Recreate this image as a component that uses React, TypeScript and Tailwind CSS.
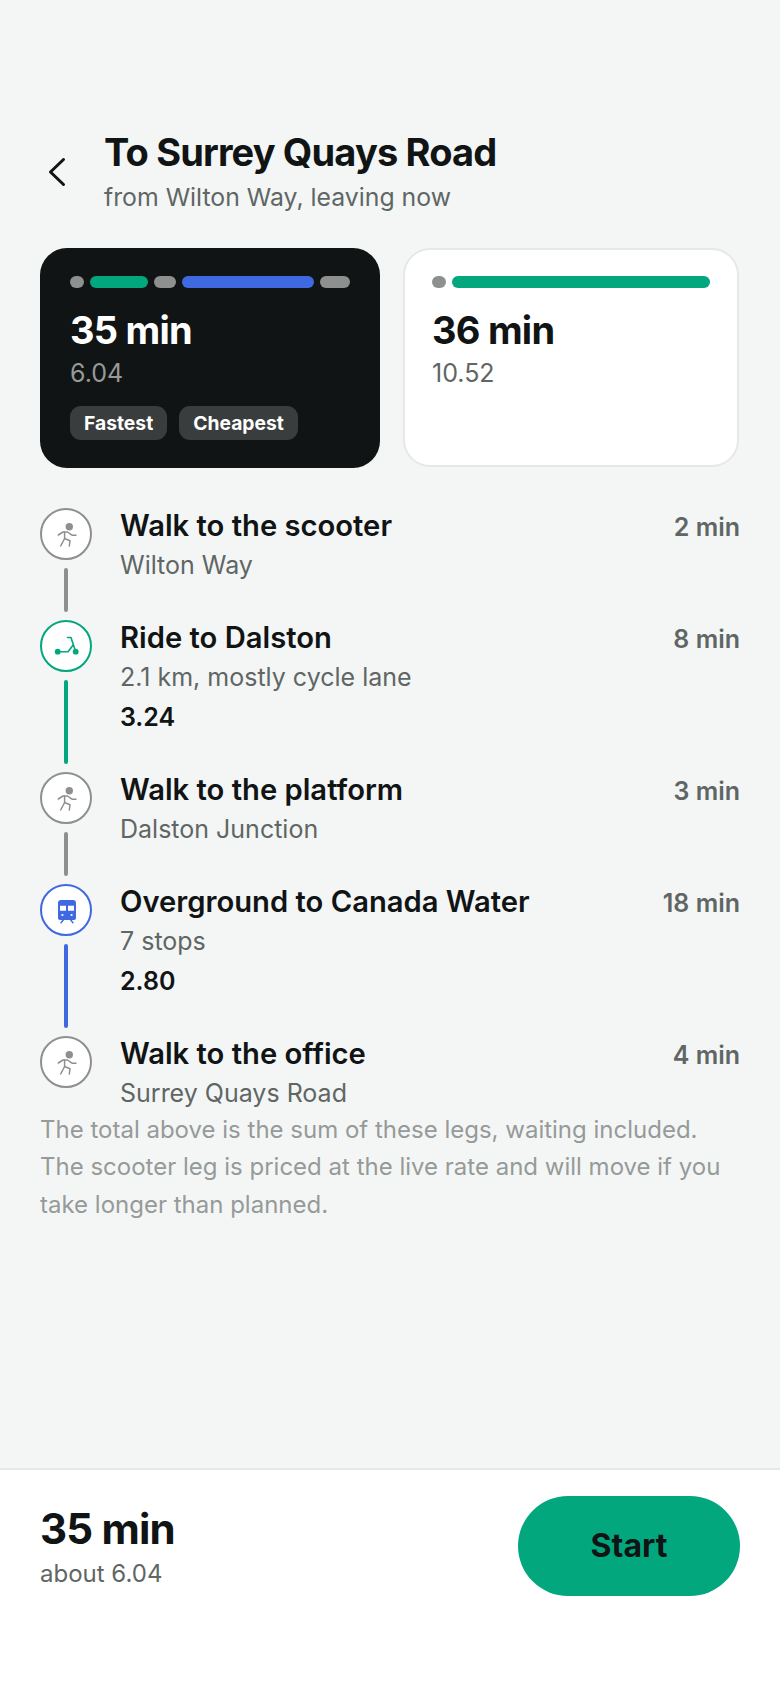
const FONT = "font-['Inter',sans-serif]";

// icon coordinates are in the 52px ring box, viewBox crops the 2px border
const Walk = () => (
  <svg viewBox="2 2 48 48" className="w-12 h-12" fill="none" stroke="#8e908f" strokeWidth="1.5" strokeLinecap="round" strokeLinejoin="round">
    <circle cx="29.3" cy="18.7" r="3.7" fill="#8e908f" stroke="none" />
    <path d="M18.3 27l4.7-3h4.5l4.5 3.2h4" />
    <path d="M24.6 24v6.5l-3.9 7.5" />
    <path d="M24.6 30.5l5.4 2.2-.7 5.3" />
  </svg>
);

const Scooter = () => (
  <svg viewBox="2 2 48 48" className="w-12 h-12" fill="none" stroke="#02a77e" strokeWidth="1.6" strokeLinecap="round" strokeLinejoin="round">
    <path d="M27.5 17.5H31l4.7 14.2" />
    <path d="M17.7 31.7H28l5.2-6.8" />
    <circle cx="17.7" cy="31.7" r="2.9" fill="#02a77e" stroke="none" />
    <circle cx="35.7" cy="31.7" r="2.9" fill="#02a77e" stroke="none" />
  </svg>
);

const Train = () => (
  <svg viewBox="2 2 48 48" className="w-12 h-12" fill="#3f69e0">
    <path
      fillRule="evenodd"
      d="M21 16h12a3 3 0 0 1 3 3v15a2 2 0 0 1-2 2H20a2 2 0 0 1-2-2V19a3 3 0 0 1 3-3zM20 21.7v5h6v-5zm8 0v5h6v-5z"
    />
    <circle cx="22.4" cy="31" r="1.1" fill="#fff" />
    <circle cx="31.6" cy="31" r="1.1" fill="#fff" />
    <path d="M23.3 36L21 38.7M30.7 36l2.3 2.7" stroke="#3f69e0" strokeWidth="1.4" strokeLinecap="round" fill="none" />
  </svg>
);

type Leg = { kind: 'walk' | 'scoot' | 'train'; title: string; sub: string; mins: string; price?: string };

const legs: Leg[] = [
  { kind: 'walk', title: 'Walk to the scooter', sub: 'Wilton Way', mins: '2 min' },
  { kind: 'scoot', title: 'Ride to Dalston', sub: '2.1 km, mostly cycle lane', mins: '8 min', price: '3.24' },
  { kind: 'walk', title: 'Walk to the platform', sub: 'Dalston Junction', mins: '3 min' },
  { kind: 'train', title: 'Overground to Canada Water', sub: '7 stops', mins: '18 min', price: '2.80' },
  { kind: 'walk', title: 'Walk to the office', sub: 'Surrey Quays Road', mins: '4 min' },
];

function LegRow({ leg, last }: { leg: Leg; last: boolean }) {
  const ring = leg.kind === 'walk' ? 'border-[#8e908f]' : leg.kind === 'scoot' ? 'border-[#02a77e]' : 'border-[#3f69e0]';
  const line = leg.kind === 'walk' ? 'bg-[#8e908f]' : leg.kind === 'scoot' ? 'bg-[#02a77e]' : 'bg-[#3f69e0]';
  return (
    <div className="flex gap-7">
      <div className="flex flex-col items-center w-[52px] shrink-0">
        <div className={`w-[52px] h-[52px] rounded-full border-2 bg-white flex items-center justify-center ${ring}`}>
          {leg.kind === 'walk' ? <Walk /> : leg.kind === 'scoot' ? <Scooter /> : <Train />}
        </div>
        {!last && <div className={`w-1 flex-1 my-2 rounded-full ${line}`} />}
      </div>
      <div className={`flex-1 flex justify-between -mt-[2px] ${last ? 'pb-[1px]' : 'pb-[35px]'}`}>
        <div>
          <div className="text-[29.2px] leading-10 font-semibold text-[#111414]">{leg.title}</div>
          <div className="text-[25px] leading-[39px] text-[#5f6664]">{leg.sub}</div>
          {leg.price && <div className="text-[25px] leading-10 font-semibold text-[#111414]">{leg.price}</div>}
        </div>
        <div className="text-[25px] leading-10 font-semibold text-[#5f6664] pt-[1px]">{leg.mins}</div>
      </div>
    </div>
  );
}

function Segments({ items }: { items: { w: number; c: string }[] }) {
  return (
    <div className="flex gap-1.5 h-3">
      {items.map((s, i) => (
        <div key={i} className={`h-3 rounded-full ${s.c}`} style={{ flexGrow: s.w, flexBasis: 0 }} />
      ))}
    </div>
  );
}

export default function App() {
  return (
    <div className={`${FONT} w-[780px] h-[1688px] bg-[#f4f6f6] flex flex-col`}>
      <div className="flex-1 px-10 pt-[127px]">
        <div className="flex items-center gap-[28px]">
          <svg viewBox="0 0 36 36" className="w-9 h-9 shrink-0" fill="none" stroke="#111414" strokeWidth="3" strokeLinecap="round" strokeLinejoin="round">
            <path d="M23.5 5.5L10.5 18l13 12.5" />
          </svg>
          <div>
            <div className="text-[38px] leading-[50px] font-bold tracking-[-0.85px] text-[#111414]">To Surrey Quays Road</div>
            <div className="text-[24.8px] leading-[40px] text-[#5f6664]">from Wilton Way, leaving now</div>
          </div>
        </div>

        <div className="flex gap-[23px] mt-[31px]">
          <div className="w-[340px] h-[220px] rounded-[27px] bg-[#111414] px-[30px] pt-7">
            <Segments items={[
              { w: 14, c: 'bg-[#8e908f]' },
              { w: 58, c: 'bg-[#02a77e]' },
              { w: 22, c: 'bg-[#8e908f]' },
              { w: 132, c: 'bg-[#3f69e0]' },
              { w: 30, c: 'bg-[#8e908f]' },
            ]} />
            <div className="mt-[17px] text-[38px] leading-[50px] font-bold tracking-[-0.76px] text-white">35 min</div>
            <div className="text-[25px] leading-9 text-[#969a98]">6.04</div>
            <div className="flex gap-3 mt-[15px]">
              <span className="h-[34px] px-3.5 rounded-[11px] bg-[#3a3d3d] text-white text-[19.3px] leading-[34px] font-bold">Fastest</span>
              <span className="h-[34px] px-3.5 rounded-[11px] bg-[#3a3d3d] text-white text-[19.3px] leading-[34px] font-bold">Cheapest</span>
            </div>
          </div>
          <div className="w-[336px] h-[219px] rounded-[27px] bg-white border-2 border-[#e6e8e8] px-[27px] pt-[26px]">
            <Segments items={[
              { w: 14, c: 'bg-[#8e908f]' },
              { w: 258, c: 'bg-[#02a77e]' },
            ]} />
            <div className="mt-[17px] text-[38px] leading-[50px] font-bold tracking-[-0.76px] text-[#111414]">36 min</div>
            <div className="text-[25px] leading-9 text-[#5f6664]">10.52</div>
          </div>
        </div>

        <div className="mt-10">
          {legs.map((l, i) => (
            <LegRow key={i} leg={l} last={i === legs.length - 1} />
          ))}
        </div>

        <div className="-mt-[3px] text-[24px] leading-[37.4px] text-[#969a98]">
          The total above is the sum of these legs, waiting included. The scooter leg is priced at the live rate and will move if you take longer than planned.
        </div>
      </div>

      <div className="h-[220px] bg-white border-t-2 border-[#e6e8e8] flex items-start justify-between px-10 pt-[26px]">
        <div className="pt-[6px]">
          <div className="text-[42px] leading-[54px] font-bold tracking-[-0.8px] text-[#111414]">35 min</div>
          <div className="text-[24px] leading-9 text-[#5f6664]">about 6.04</div>
        </div>
        <div className="w-[222px] h-[100px] rounded-full bg-[#02a77e] flex items-center justify-center text-[32px] font-bold text-[#111414]">Start</div>
      </div>
    </div>
  );
}
